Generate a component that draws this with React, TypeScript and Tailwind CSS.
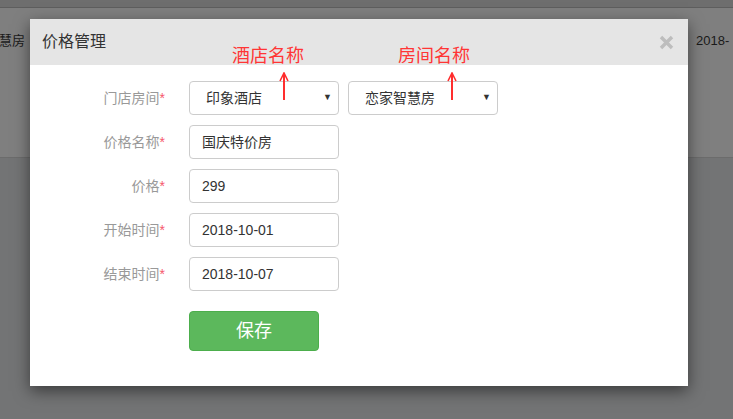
import React from "react";

const font = { fontFamily: '"Liberation Sans", "Noto Sans CJK SC", sans-serif' };

function Label({ text }: { text: string }) {
  return (
    <div className="w-[135px] shrink-0 text-right text-[14px] text-[#999]">
      {text}
      <span className="text-[#f5576c]">*</span>
    </div>
  );
}

function Select({ value }: { value: string }) {
  return (
    <div className="flex h-[34px] w-[150px] items-center justify-between rounded-[4px] border border-[#ccc] pl-[16px] pr-[6px] text-[14px] text-[#333]">
      <span>{value}</span>
      <span className="text-[9px] text-[#333]">▼</span>
    </div>
  );
}

function Input({ value }: { value: string }) {
  return (
    <div className="flex h-[34px] w-[150px] items-center rounded-[4px] border border-[#ccc] pl-[12px] text-[14px] text-[#333]">
      {value}
    </div>
  );
}

function Row({ label, children }: { label: string; children: React.ReactNode }) {
  return (
    <div className="flex items-center gap-[24px]">
      <Label text={label} />
      <div className="flex gap-[9px]">{children}</div>
    </div>
  );
}

function Arrow() {
  return (
    <svg width="10" height="28" viewBox="0 0 10 28">
      <line x1="5" y1="2" x2="5" y2="28" stroke="#ff2e2e" strokeWidth="2" />
      <path d="M1 9 L5 1 L9 9" fill="none" stroke="#ff2e2e" strokeWidth="1.6" />
    </svg>
  );
}

export default function App() {
  return (
    <div className="relative h-[419px] w-[733px] overflow-hidden bg-[#737475]" style={font}>
      {/* underlying page */}
      <div className="h-[7px] bg-[#6e6e6e]" />
      <div className="h-[1px] bg-[#5e5e5e]" />
      <div className="flex h-[149px] items-start justify-between bg-[#7f7f7f] pt-[23px] text-[13px] text-[#1a1a1a]">
        <span className="-ml-[1px]">慧房</span>
        <span className="w-[37px] whitespace-nowrap">2018-</span>
      </div>
      <div className="h-[1px] bg-[#6c6c6c]" />

      {/* modal */}
      <div className="absolute left-[30px] top-[19px] flex h-[367px] w-[658px] flex-col bg-white shadow-[0_5px_15px_rgba(0,0,0,0.5)]">
        <div className="flex h-[46px] items-center justify-between bg-[#e5e5e5] pl-[12px] pr-[14px]">
          <span className="text-[16px] text-[#333]">价格管理</span>
          <svg width="15" height="15" viewBox="0 0 15 15">
            <path d="M2 2 L13 13 M13 2 L2 13" stroke="#bdbdbd" strokeWidth="3.4" strokeLinecap="butt" />
          </svg>
        </div>
        <div className="flex flex-col gap-[10px] pt-[16px]">
          <Row label="门店房间">
            <Select value="印象酒店" />
            <Select value="恋家智慧房" />
          </Row>
          <Row label="价格名称">
            <Input value="国庆特价房" />
          </Row>
          <Row label="价格">
            <Input value="299" />
          </Row>
          <Row label="开始时间">
            <Input value="2018-10-01" />
          </Row>
          <Row label="结束时间">
            <Input value="2018-10-07" />
          </Row>
          <div className="mt-[10px] pl-[159px]">
            <button className="flex h-[40px] w-[130px] items-center justify-center rounded-[4px] border border-[#4cae4c] bg-[#5cb85c] text-[18px] text-white">
              保存
            </button>
          </div>
        </div>
      </div>

      {/* annotations */}
      <div className="absolute left-[231px] top-[45px] flex w-[74px] flex-col items-center">
        <span className="text-[18px] leading-[22px] text-[#ff3535]">酒店名称</span>
        <div className="ml-[32px] mt-[5px]"><Arrow /></div>
      </div>
      <div className="absolute left-[397px] top-[45px] flex w-[74px] flex-col items-center">
        <span className="text-[18px] leading-[22px] text-[#ff3535]">房间名称</span>
        <div className="ml-[35px] mt-[5px]"><Arrow /></div>
      </div>
    </div>
  );
}
